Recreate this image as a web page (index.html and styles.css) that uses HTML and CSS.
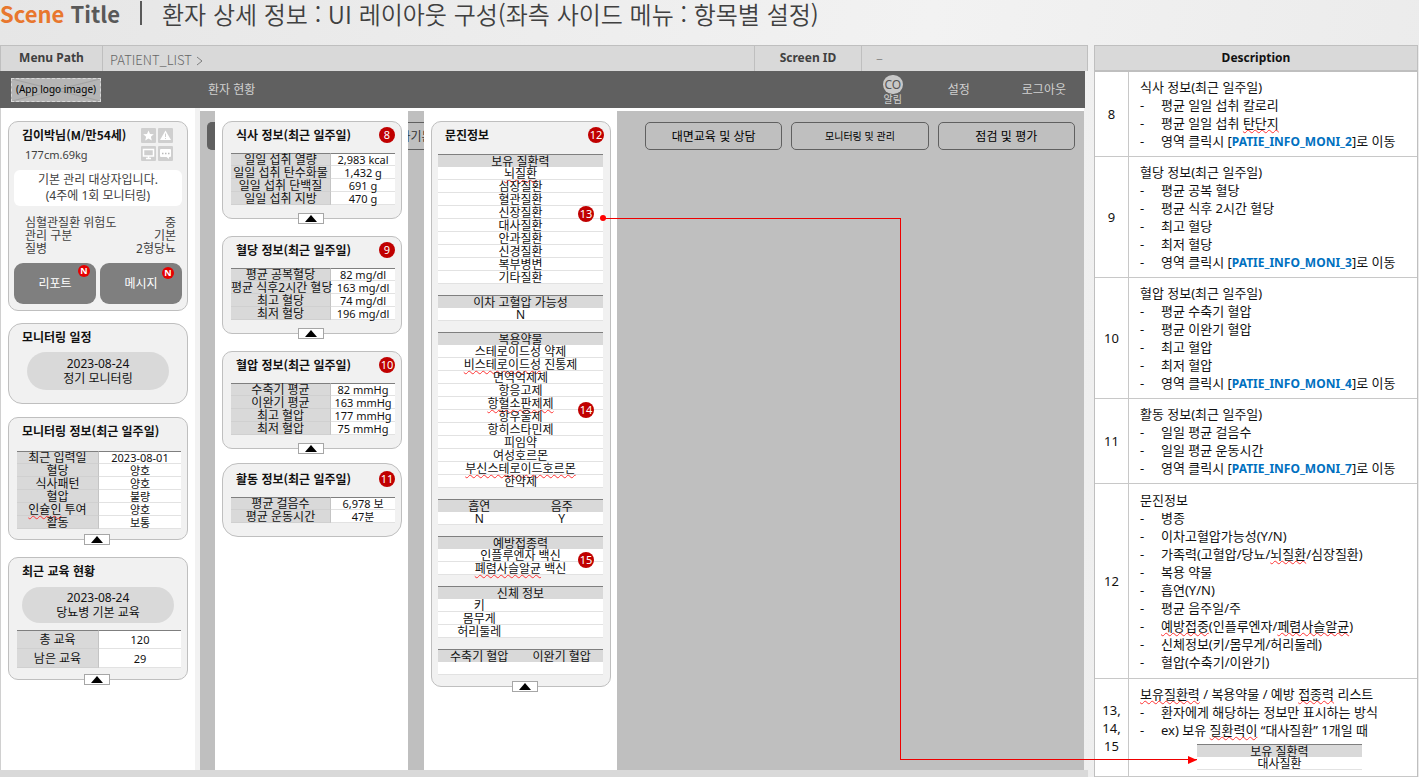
FILE: index.html
```html
<!DOCTYPE html>
<html lang="ko">
<head>
<meta charset="utf-8">
<title>Scene Title</title>
<link rel="stylesheet" href="styles.css">
</head>
<body>
<header class="scene">
  <h1 class="scene-name"><span class="accent">Scene</span> Title</h1>
  <span class="scene-bar"></span>
  <p class="scene-desc">환자 상세 정보 : UI 레이아웃 구성(좌측 사이드 메뉴 : 항목별 설정)</p>
</header>

<div class="page">
  <main class="screen">
    <div class="path">
      <div class="path-label">Menu Path</div>
      <div class="path-value">PATIENT_LIST
        <svg class="chevron" viewBox="0 0 7 10"><path d="M1 1l5 4-5 4" fill="none" stroke="#7f7f7f"/></svg>
      </div>
      <div class="path-label id-label">Screen ID</div>
      <div class="path-value id-value">–</div>
    </div>

    <nav class="appbar">
      <div class="logo">
        <svg class="logo-cross" viewBox="0 0 90 24" preserveAspectRatio="none"><path d="M0 0l90 24M0 24L90 0" stroke="#a0a0a0" fill="none"/></svg>
        <span class="logo-text">(App logo image)</span>
      </div>
      <a class="nav-link" href="#">환자 현황</a>
      <a class="alarm" href="#"><span class="alarm-icon">CO</span><span>알림</span></a>
      <a class="nav-link setting" href="#">설정</a>
      <a class="nav-link" href="#">로그아웃</a>
    </nav>

    <div class="work">
      <aside class="side">
        <section class="card patient">
          <div class="patient-head">
            <div>
              <h2 class="card-title">김이박님(M/만54세)</h2>
              <p class="body-size">177cm.69kg</p>
            </div>
            <div class="icons">
              <svg viewBox="0 0 15 15"><rect width="15" height="15" rx="1" fill="#cfcfcf"/><path d="M7.500 2.500l1.500 3.500 3.800.3-2.900 2.500.9 3.700-3.300-2-3.300 2 .9-3.700L2.200 6.300 6 6z" fill="#fff"/></svg>
              <svg viewBox="0 0 15 15"><rect width="15" height="15" rx="1" fill="#cfcfcf"/><path d="M7.500 2.500l5.500 9.500H2z" fill="#fff"/><path d="M7.500 5.500v3.500M7.500 10v1" stroke="#cfcfcf"/></svg>
              <svg viewBox="0 0 15 15"><rect width="15" height="15" rx="1" fill="#cfcfcf"/><path d="M2.500 3.500h10v6.500h-10zM5 12.500h5M7.500 10v2.500" fill="none" stroke="#fff" stroke-width="1.500"/></svg>
              <svg viewBox="0 0 15 15"><rect width="15" height="15" rx="1" fill="#cfcfcf"/><path d="M3 3h9q1 0 1 1v6q0 1-1 1h-1v2l-2.500-2H3q-1 0-1-1V4q0-1 1-1z" fill="#fff"/><path d="M4 7.500h1.500M7 7.500h1.500M10 7.500h1.500" stroke="#bbb" stroke-width="1.500"/></svg>
            </div>
          </div>
          <p class="notice">기본 관리 대상자입니다.<br>(4주에 1회 모니터링)</p>
          <dl class="facts">
            <div><dt>심혈관질환 위험도</dt><dd>중</dd></div>
            <div><dt>관리 구분</dt><dd>기본</dd></div>
            <div><dt>질병</dt><dd>2형당뇨</dd></div>
          </dl>
          <div class="actions">
            <button class="action" type="button">리포트<span class="new">N</span></button>
            <button class="action" type="button">메시지<span class="new low">N</span></button>
          </div>
        </section>

        <section class="card schedule">
          <h2 class="card-title">모니터링 일정</h2>
          <p class="pill">2023-08-24<br>정기 모니터링</p>
        </section>

        <section class="card monitor">
          <h2 class="card-title">모니터링 정보(최근 일주일)</h2>
          <table class="pairs half">
            <tr><th>최근 입력일</th><td>2023-08-01</td></tr>
            <tr><th>혈당</th><td>양호</td></tr>
            <tr><th>식사패턴</th><td>양호</td></tr>
            <tr><th>혈압</th><td>불량</td></tr>
            <tr><th><span class="typo">인슐인</span> 투여</th><td>양호</td></tr>
            <tr><th>활동</th><td>보통</td></tr>
          </table>
          <button class="fold" type="button" aria-label="접기"></button>
        </section>

        <section class="card edu">
          <h2 class="card-title">최근 교육 현황</h2>
          <p class="pill wide">2023-08-24<br>당뇨병 기본 교육</p>
          <table class="pairs half tall">
            <tr><th>총 교육</th><td>120</td></tr>
            <tr><th>남은 교육</th><td>29</td></tr>
          </table>
          <button class="fold" type="button" aria-label="접기"></button>
        </section>
      </aside>

      <div class="gap first"><span class="tab dark"></span></div>

      <div class="column">
        <section class="card metric">
          <h2 class="card-title">식사 정보(최근 일주일)</h2><span class="mark">8</span>
          <table class="pairs">
            <tr><th>일일 섭취 열량</th><td>2,983 kcal</td></tr>
            <tr><th>일일 섭취 탄수화물</th><td>1,432 g</td></tr>
            <tr><th>일일 섭취 단백질</th><td>691 g</td></tr>
            <tr><th>일일 섭취 지방</th><td>470 g</td></tr>
          </table>
          <button class="fold" type="button" aria-label="접기"></button>
        </section>
        <section class="card metric">
          <h2 class="card-title">혈당 정보(최근 일주일)</h2><span class="mark">9</span>
          <table class="pairs">
            <tr><th>평균 공복혈당</th><td>82 mg/dl</td></tr>
            <tr><th>평균 식후2시간 혈당</th><td>163 mg/dl</td></tr>
            <tr><th>최고 혈당</th><td>74 mg/dl</td></tr>
            <tr><th>최저 혈당</th><td>196 mg/dl</td></tr>
          </table>
          <button class="fold" type="button" aria-label="접기"></button>
        </section>
        <section class="card metric">
          <h2 class="card-title">혈압 정보(최근 일주일)</h2><span class="mark">10</span>
          <table class="pairs">
            <tr><th>수축기 평균</th><td>82 mmHg</td></tr>
            <tr><th>이완기 평균</th><td>163 mmHg</td></tr>
            <tr><th>최고 혈압</th><td>177 mmHg</td></tr>
            <tr><th>최저 혈압</th><td>75 mmHg</td></tr>
          </table>
          <button class="fold" type="button" aria-label="접기"></button>
        </section>
        <section class="card metric last">
          <h2 class="card-title">활동 정보(최근 일주일)</h2><span class="mark">11</span>
          <table class="pairs">
            <tr><th>평균 걸음수</th><td>6,978 보</td></tr>
            <tr><th>평균 운동시간</th><td>47분</td></tr>
          </table>
        </section>
      </div>

      <div class="gap"><span class="tab">사기본</span></div>

      <div class="column">
        <section class="card survey">
          <h2 class="card-title">문진정보</h2><span class="mark">12</span>
          <div class="group">
            <table class="list">
              <tr><th>보유 질환력</th></tr>
              <tr><td><span class="typo">뇌질환</span></td></tr>
              <tr><td>심장질환</td></tr>
              <tr><td>혈관질환</td></tr>
              <tr><td>신장질환</td></tr>
              <tr><td>대사질환</td></tr>
              <tr><td>안과질환</td></tr>
              <tr><td>신경질환</td></tr>
              <tr><td>복부병변</td></tr>
              <tr><td>기타질환</td></tr>
            </table>
            <span class="mark inner">13</span>
          </div>
          <table class="list">
            <tr><th>이차 고혈압 가능성</th></tr>
            <tr><td>N</td></tr>
          </table>
          <div class="group">
            <table class="list">
              <tr><th>복용약물</th></tr>
              <tr><td>스테로이드성 약제</td></tr>
              <tr><td><span class="typo">비스테로이드성</span> 진통제</td></tr>
              <tr><td>면역억제제</td></tr>
              <tr><td>항응고제</td></tr>
              <tr><td><span class="typo">항혈소판제제</span></td></tr>
              <tr><td>항우울제</td></tr>
              <tr><td>항히스타민제</td></tr>
              <tr><td>피임약</td></tr>
              <tr><td>여성호르몬</td></tr>
              <tr><td><span class="typo">부신스테로이드호르몬</span></td></tr>
              <tr><td>한약제</td></tr>
            </table>
            <span class="mark inner">14</span>
          </div>
          <table class="list">
            <tr><th>흡연</th><th>음주</th></tr>
            <tr><td>N</td><td>Y</td></tr>
          </table>
          <div class="group">
            <table class="list">
              <tr><th>예방접종력</th></tr>
              <tr><td>인플루엔자 백신</td></tr>
              <tr><td><span class="typo">폐렴사슬알균</span> 백신</td></tr>
            </table>
            <span class="mark inner">15</span>
          </div>
          <table class="list">
            <tr><th colspan="2">신체 정보</th></tr>
            <tr><td>키</td><td></td></tr>
            <tr><td>몸무게</td><td></td></tr>
            <tr><td>허리둘레</td><td></td></tr>
          </table>
          <table class="list">
            <tr><th>수축기 혈압</th><th>이완기 혈압</th></tr>
            <tr><td></td><td></td></tr>
          </table>
          <button class="fold" type="button" aria-label="접기"></button>
        </section>
      </div>

      <div class="canvas">
        <button class="step" type="button">대면교육 및 상담</button>
        <button class="step small" type="button">모니터링 및 관리</button>
        <button class="step" type="button">점검 및 평가</button>
      </div>
    </div>
  </main>

  <section class="notes">
    <table class="notes-table">
      <thead><tr><th colspan="2">Description</th></tr></thead>
      <tbody>
        <tr><td class="no">8</td><td>식사 정보(최근 일주일)
          <ul><li>평균 일일 섭취 칼로리</li><li>평균 일일 섭취 <span class="typo">탄단지</span></li><li>영역 클릭시 [<a href="#">PATIE_INFO_MONI_2</a>]로 이동</li></ul></td></tr>
        <tr><td class="no">9</td><td>혈당 정보(최근 일주일)
          <ul><li>평균 공복 혈당</li><li>평균 식후 2시간 혈당</li><li>최고 혈당</li><li>최저 혈당</li><li>영역 클릭시 [<a href="#">PATIE_INFO_MONI_3</a>]로 이동</li></ul></td></tr>
        <tr><td class="no">10</td><td>혈압 정보(최근 일주일)
          <ul><li>평균 수축기 혈압</li><li>평균 이완기 혈압</li><li>최고 혈압</li><li>최저 혈압</li><li>영역 클릭시 [<a href="#">PATIE_INFO_MONI_4</a>]로 이동</li></ul></td></tr>
        <tr><td class="no">11</td><td>활동 정보(최근 일주일)
          <ul><li>일일 평균 걸음수</li><li>일일 평균 운동시간</li><li>영역 클릭시 [<a href="#">PATIE_INFO_MONI_7</a>]로 이동</li></ul></td></tr>
        <tr class="roomy"><td class="no">12</td><td>문진정보
          <ul><li>병종</li><li>이차고혈압가능성(Y/N)</li><li>가족력(고혈압/당뇨/<span class="typo">뇌질환</span>/심장질환)</li><li>복용 약물</li><li>흡연(Y/N)</li><li>평균 음주일/주</li><li><span class="typo">예방접중</span>(인플루엔자/<span class="typo">페렴사슬알균</span>)</li><li>신체정보(키/몸무게/허리둘레)</li><li>혈압(수축기/이완기)</li></ul></td></tr>
        <tr><td class="no">13,<br>14,<br>15</td><td><span class="typo">보유질환력</span> / 복용약물 / 예방 <span class="typo">접종력</span> 리스트
          <ul><li>환자에게 해당하는 정보만 표시하는 방식</li><li>ex) 보유 <span class="typo">질환력이</span> “대사질환” 1개일 때</li></ul>
          <table class="list sample">
            <tr><th>보유 질환력</th></tr>
            <tr><td>대사질환</td></tr>
          </table></td></tr>
      </tbody>
    </table>
  </section>

  <div class="connector"><span class="line-a"></span><span class="line-b"></span></div>
</div>
</body>
</html>
```
FILE: styles.css
```css
* { box-sizing: border-box; }

body, h1, h2, p, dl, dd, ul { margin: 0; padding: 0; }

body {
  min-height: 100vh;
  display: flex;
  flex-direction: column;
  overflow: hidden;
  background: linear-gradient(100deg, #e6e6e6, #f2f2f2 60%, #eaeaea);
  font: 12px/13px "Noto Sans", "Noto Sans CJK KR", sans-serif;
  color: #111;
}

a { color: inherit; text-decoration: none; }

button { font: inherit; padding: 0; }

th { font-weight: 400; }

/* Scene heading */
.scene {
  height: 45px;
  display: flex;
  align-items: flex-start;
  white-space: nowrap;
}

.scene-name {
  width: 140px;
  font: 600 22px/27px "Noto Sans CJK KR", sans-serif;
  color: #595959;
}

.accent { color: #e8772e; }

.scene-bar {
  width: 2px;
  height: 24px;
  margin-top: 1px;
  margin-right: 20px;
  background: #595959;
}

.scene-desc {
  font: 350 24px/28px "Noto Sans CJK KR", sans-serif;
  color: #404040;
}

/* Two panes */
.page {
  position: relative;
  flex: 1;
  display: flex;
  align-items: flex-start;
  gap: 6px;
}

.screen {
  flex: 1;
  min-height: calc(100vh - 45px);
  display: flex;
  flex-direction: column;
  border-bottom: 7px solid #d9d9d9;
}

.path {
  height: 26px;
  display: flex;
  background: #d9d9d9;
  border: 1px solid #bfbfbf;
  border-bottom: 0;
}

.path-label {
  width: 102px;
  border-right: 1px solid #bfbfbf;
  text-align: center;
  font-weight: 700;
  line-height: 24px;
  color: #404040;
}

.path-value {
  flex: 1;
  padding-left: 7px;
  font: 300 13px/27px "Noto Sans CJK KR", sans-serif;
  color: #666;
}

.chevron { width: 7px; height: 10px; vertical-align: -1px; }

.id-label { width: 108px; border-left: 1px solid #bfbfbf; }

.id-value { flex: none; width: 225px; padding-left: 14px; line-height: 24px; }

.appbar {
  height: 37px;
  margin-right: 3px;
  padding: 0 19px 0 11px;
  display: flex;
  align-items: center;
  background: #606060;
  color: #d0d0d0;
}

.logo {
  position: relative;
  width: 90px;
  height: 24px;
  margin-right: 107px;
  border: 1px dashed #d9d9d9;
  background: #b5b5b5;
  text-align: center;
  color: #000;
}

.logo-cross { position: absolute; inset: 0; width: 100%; height: 100%; }

.logo-text {
  position: relative;
  font-size: 10px;
  line-height: 20px;
  white-space: nowrap;
}

.alarm {
  margin-left: auto;
  margin-right: 45px;
  display: flex;
  flex-direction: column;
  align-items: center;
  font-size: 10px;
  line-height: 11px;
}

.alarm-icon {
  width: 20px;
  height: 19px;
  border-radius: 10px;
  background: #c8c8c8;
  text-align: center;
  font-size: 12px;
  line-height: 19px;
  color: #555;
}

.setting { margin-right: 52px; }

/* Working area */
.work {
  flex: 1;
  display: flex;
  align-items: stretch;
  margin-right: 4px;
  background: #bfbfbf;
}

.side {
  width: 200px;
  padding: 13px 7px 0 7px;
  background: #fff;
  border-left: 1px solid #d0d0d0;
  border-right: 5px solid #f2f2f2;
}

.column {
  width: 193px;
  padding: 13px 6px 0 7px;
  background: #fff;
}

.gap {
  width: 16px;
  padding-top: 11px;
  border-top: 3px solid #fff;
  overflow: hidden;
}

.gap.first { width: 15px; padding-left: 7px; }

.tab {
  height: 28px;
  display: flex;
  justify-content: center;
  align-items: center;
  border-top: 1px solid #606060;
  border-bottom: 1px solid #606060;
  white-space: nowrap;
  color: #333;
}

.tab.dark { background: #606060; border-radius: 5px 0 0 5px; }

.canvas {
  flex: 1;
  display: grid;
  grid-template-columns: 1fr 1fr 1fr;
  gap: 9px;
  align-content: start;
  padding: 11px 9px 0 28px;
  border-top: 3px solid #fff;
}

.step {
  height: 28px;
  padding-bottom: 2px;
  border: 1px solid #606060;
  border-radius: 5px;
  background: none;
  font-family: "Noto Sans CJK KR", sans-serif;
  color: #000;
}

.step.small { font-size: 10px; }

/* Cards */
.card {
  position: relative;
  padding: 6px 6px 0 8px;
  border: 1px solid #bfbfbf;
  border-radius: 10px;
  background: #f1f1f1;
}

.card-title {
  padding-left: 5px;
  font: 700 12px/13px "Noto Sans CJK KR", sans-serif;
  color: #111;
  white-space: nowrap;
}

.mark {
  position: absolute;
  top: 5px;
  right: 6px;
  width: 16px;
  height: 16px;
  border-radius: 50%;
  background: #c00000;
  color: #fff;
  text-align: center;
  font-size: 11px;
  line-height: 16px;
}

.mark.inner { top: 52px; right: 9px; }

.group { position: relative; }

.group:nth-of-type(2) .mark { top: 70px; }

.group:nth-of-type(3) .mark { top: 16px; }

.fold {
  position: absolute;
  left: 50%;
  bottom: -6px;
  width: 26px;
  height: 11px;
  margin-left: -14px;
  border: 1px solid #a6a6a6;
  background: #fff;
}

.fold::before {
  content: "";
  position: absolute;
  left: 6px;
  top: 1px;
  border: 6px solid transparent;
  border-top: 0;
  border-bottom: 7px solid #000;
}

.patient { height: 190px; padding: 6px 5px 0; }

.patient-head {
  display: flex;
  justify-content: space-between;
  padding-right: 9px;
  padding-left: 3px;
}

.body-size {
  padding: 7px 0 0 8px;
  font-size: 11px;
  color: #404040;
}

.icons {
  display: grid;
  grid-template-columns: 15px 15px;
  gap: 2px;
}

.icons svg { width: 15px; height: 15px; display: block; }

.notice {
  margin-top: 9px;
  padding: 2px 0;
  border-radius: 6px;
  background: #fff;
  text-align: center;
  line-height: 16px;
  color: #404040;
}

.facts { padding: 10px 6px 0 11px; color: #404040; }

.facts div { display: flex; justify-content: space-between; }

.actions {
  display: grid;
  grid-template-columns: 1fr 1fr;
  gap: 4px;
  margin-top: 8px;
}

.action {
  position: relative;
  height: 41px;
  border: 0;
  border-radius: 9px;
  background: #7f7f7f;
  color: #fff;
}

.new {
  position: absolute;
  top: 2px;
  right: 6px;
  width: 12px;
  height: 12px;
  border-radius: 50%;
  background: #e60000;
  font-size: 9px;
  font-weight: 700;
  line-height: 12px;
}

.new.low { top: 4px; right: 8px; }

.schedule {
  height: 81px;
  margin-top: 12px;
  border-radius: 14px;
}

.monitor { height: 123px; margin-top: 13px; }

.edu { height: 123px; margin-top: 17px; }

.pill {
  margin: 9px 12px 0 10px;
  padding: 4px 0;
  border-radius: 20px;
  background: #d9d9d9;
  text-align: center;
  line-height: 15px;
}

.pill.wide { margin: 10px 7px 0 5px; padding: 3px 0; }

.metric { height: 98px; margin-bottom: 17px; }

.metric.last {
  height: 74px;
  margin-top: -3px;
  padding-top: 8px;
  border-radius: 16px;
}

.metric.last .mark { top: 7px; }

/* Tables */
.pairs, .list {
  width: 100%;
  border-spacing: 0;
  table-layout: fixed;
  text-align: center;
}

.pairs { margin-top: 12px; }

.monitor .pairs { margin-top: 14px; }

.pairs th, .pairs td, .list th, .list td {
  height: 13px;
  padding: 2px 0 0;
  line-height: 10px;
  white-space: nowrap;
  border-bottom: 1px solid #e2e2e2;
}

.pairs th {
  width: 61%;
  background: #d9d9d9;
  border-right: 1px solid #c4c4c4;
  border-bottom-color: #d0d0d0;
}

.pairs td { background: #fff; font-size: 11px; }

.pairs.half th { width: 50%; }

.pairs tr:first-child > * { padding-top: 1px; border-top: 1px solid #7f7f7f; }

.edu .tall { margin-top: 7px; }

.pairs.tall th, .pairs.tall td { height: 19px; }

.list th {
  border-top: 1px solid #7f7f7f;
  border-bottom: 0;
  background: #d9d9d9;
}

.list td { background: #fff; }

.survey {
  height: 566px;
  padding: 6px 7px 0 6px;
  display: flex;
  flex-direction: column;
  gap: 11px;
}

.survey .card-title { padding-left: 7px; }

.survey .group:first-of-type { margin-top: 2px; }

.survey .fold { margin-left: -9px; }

.typo {
  text-decoration: underline wavy #f33 1px;
  text-decoration-skip-ink: none;
  text-underline-offset: 1px;
}

/* Description pane */
.notes {
  width: 325px;
  min-height: calc(100vh - 45px);
  padding-right: 1px;
}

.notes-table {
  width: 100%;
  border-spacing: 0;
  border: 1px solid #bfbfbf;
  background: #fff;
  font-size: 13px;
  line-height: 18px;
}

.notes-table > thead th {
  height: 26px;
  padding: 0;
  border-bottom: 2px solid #bfbfbf;
  background: #d9d9d9;
  font-size: 12px;
  font-weight: 700;
}

.notes-table > tbody > tr > td {
  padding: 6px 0 6px 11px;
  border-bottom: 1px solid #c8c8c8;
  white-space: nowrap;
}

.notes-table > tbody > tr > .no {
  width: 34px;
  padding-left: 0;
  border-right: 1px solid #c8c8c8;
  text-align: center;
}

.notes-table > tbody > .roomy > td { padding-top: 7px; padding-bottom: 7px; }

.notes ul { list-style: none; }

.notes li { padding-left: 21px; }

.notes li::before {
  content: "-";
  float: left;
  margin-left: -21px;
}

.notes a {
  font-size: 12px;
  line-height: 14px;
  font-weight: 700;
  color: #0070c0;
}

.notes .sample {
  width: 165px;
  margin: 5px 0 0 57px;
  font-size: 12px;
}

/* Red connector from the survey list to the sample */
.connector {
  position: absolute;
  top: 173px;
  left: 603px;
  right: 222px;
  height: 542px;
  display: flex;
  pointer-events: none;
}

.line-a { flex: 1; border-top: 1px solid #e00; border-right: 1px solid #e00; }

.line-b { flex: 1; border-bottom: 1px solid #e00; }

.connector::before {
  content: "";
  position: absolute;
  left: -3px;
  top: -3px;
  width: 6px;
  height: 6px;
  border-radius: 50%;
  background: #f00;
}

.connector::after {
  content: "";
  position: absolute;
  right: 0;
  bottom: -4px;
  border: 4px solid transparent;
  border-left: 9px solid #f00;
  border-right: 0;
}
```
